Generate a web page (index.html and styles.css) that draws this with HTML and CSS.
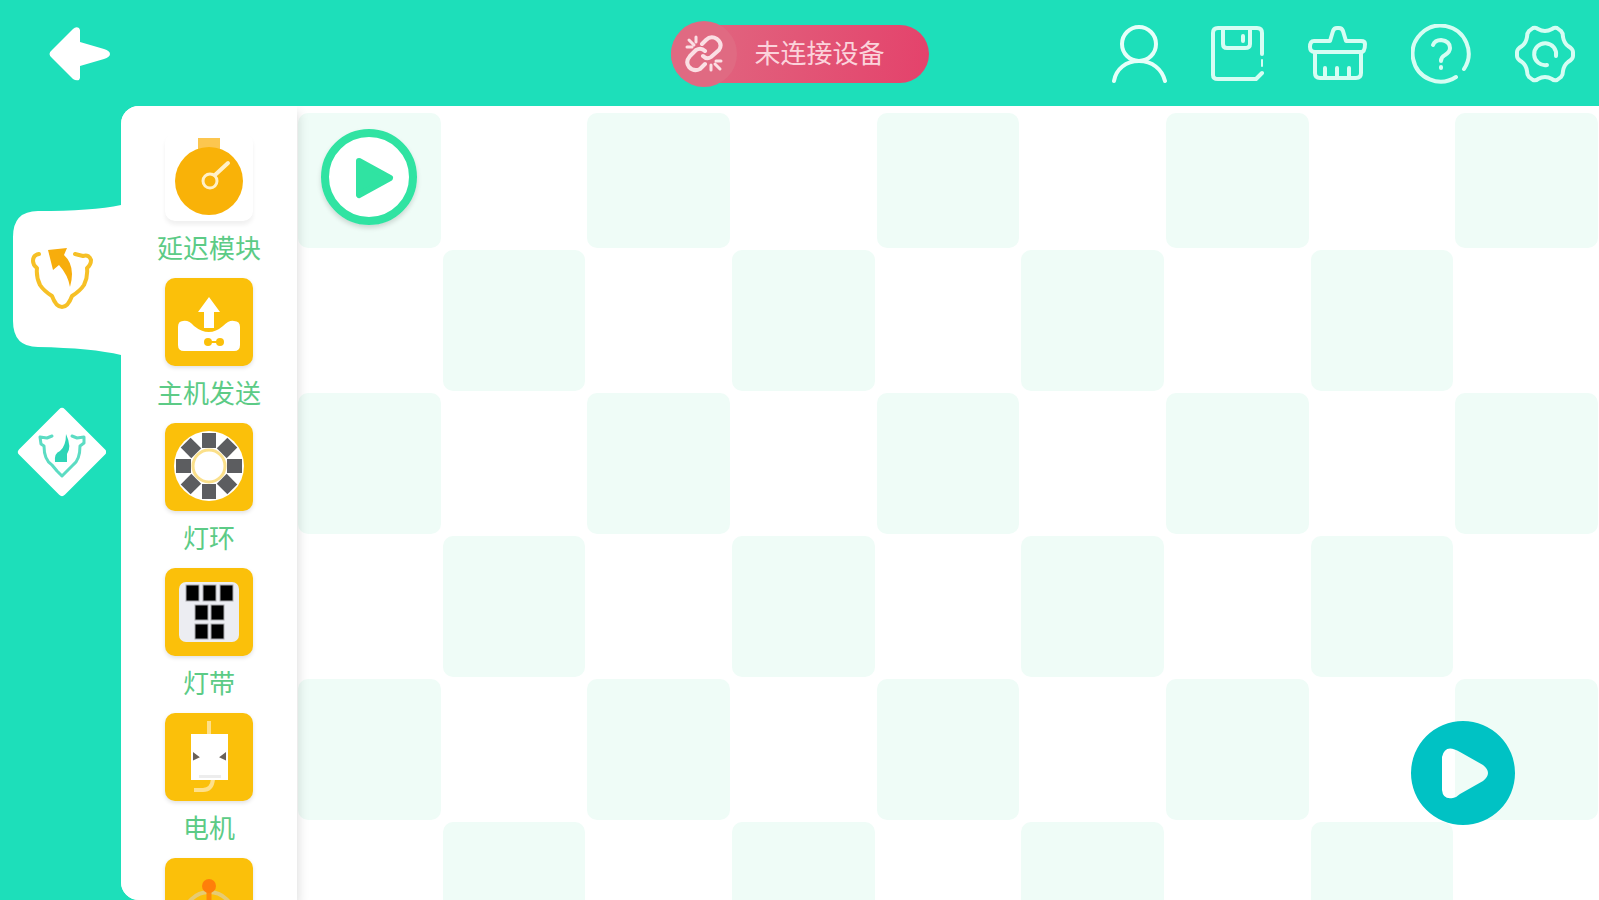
FILE: index.html
```html
<!DOCTYPE html>
<html lang="zh-CN">

<head>
    <meta charset="UTF-8">
    <meta name="viewport" content="width=device-width, initial-scale=1.0">
    <title>编程</title>
    <link rel="stylesheet" href="styles.css">
</head>

<body>
    <header>
        <button class="back" aria-label="返回">
            <svg width="62" height="54" viewBox="0 0 62 54">
                <path d="M3 23 L24 2 Q27 -1 30 1 L31 3 V15 L55 22 Q61 24 61 27 Q61 30 55 32 L31 39 V51 L30 53 Q27 54 24 52 L3 31 Q-2 27 3 23 Z" fill="#fff" />
            </svg>
        </button>

        <button class="device">
            <span class="device-icon">
                <svg width="40" height="40" viewBox="0 0 40 40" fill="none" stroke="#fbdfe4" stroke-width="4" stroke-linecap="round" stroke-linejoin="round">
                    <path d="M18 10 L22 6 Q27 1 33 5 Q39 10 35 16 L27 23 Q23 26 19 22" />
                    <path d="M21 17 Q17 13 12 16 L6 22 Q1 28 5 33 Q10 38 16 35 L21 30" />
                    <path d="M12 3 V8 M5 6 L10 11 M3 13 H8" stroke-width="3" />
                    <path d="M27 31 V36 M31 30 L36 35 M32 27 H37" stroke-width="3" />
                </svg>
            </span>
            <span class="device-text">未连接设备</span>
        </button>

        <nav class="tools">
            <button aria-label="用户">
                <svg width="55" height="60" viewBox="0 0 55 60" fill="none" stroke="#e6fff9" stroke-width="4" stroke-linecap="round">
                    <circle cx="27" cy="20" r="17" />
                    <path d="M2 57 C4 45 14 37 27 37 S50 45 53 57" />
                </svg>
            </button>
            <button aria-label="保存">
                <svg width="53" height="60" viewBox="0 0 53 60" fill="none" stroke="#d6fdf3" stroke-width="4" stroke-linecap="round" stroke-linejoin="round">
                    <path d="M51 30 V9 Q51 4 46 4 H7 Q2 4 2 9 V51 Q2 55 7 55 H45 L51 49" />
                    <path d="M51 36 V42" stroke-width="2" />
                    <path d="M12 5 V20 Q12 24 16 24 H34 Q39 24 39 20 V5 M32 12 V17" />
                </svg>
            </button>
            <button aria-label="清空">
                <svg width="59" height="60" viewBox="0 0 59 60" fill="none" stroke="#d6fdf3" stroke-width="4" stroke-linecap="round" stroke-linejoin="round">
                    <path d="M22 17 L25 7 Q26 4 29 4 H31 Q34 4 35 7 L38 17 H53 Q57 17 57 20 Q57 28 53 28 H7 Q2 28 2 23 Q2 17 6 17 Z" />
                    <path d="M7 28 V49 Q7 54 12 54 H48 Q53 54 53 49 V28" />
                    <path d="M17 44 V53 M29 44 V53 M41 44 V53" />
                </svg>
            </button>
            <button aria-label="帮助">
                <svg width="60" height="60" viewBox="0 0 60 60" fill="none" stroke="#d6fdf3" stroke-width="4" stroke-linecap="round" stroke-linejoin="round">
                    <path d="M45 53 A28 28 0 1 1 53 45" />
                    <path d="M22 21 Q24 16 30 16 Q39 17 39 24 Q39 28 34 31 Q30 33 30 37" />
                    <path d="M30 43 V44" />
                </svg>
            </button>
            <button aria-label="设置">
                <svg width="60" height="60" viewBox="0 0 60 60" fill="none" stroke="#d6fdf3" stroke-width="4" stroke-linecap="round" stroke-linejoin="round">
                    <path d="M18 4 Q21 3 23 5 Q30 9 37 5 Q39 3 42 4 L46 7 Q48 9 48 13 Q49 19 53 22 Q58 25 58 28 V32 Q58 35 53 38 Q49 41 48 47 Q48 51 46 53 L42 56 Q39 57 37 55 Q30 51 23 55 Q21 57 18 56 L14 53 Q12 51 12 47 Q11 41 7 38 Q2 35 2 32 V28 Q2 25 7 22 Q11 19 12 13 Q12 9 14 7 Z" />
                    <path d="M32 41 A11 11 0 1 1 41 32" />
                </svg>
            </button>
        </nav>
    </header>

    <main>
        <aside class="tabs">
            <button class="tab active" aria-label="执行模块">
                <svg width="109" height="150" viewBox="0 0 109 150">
                    <path d="M109 0 Q80 6 26 6 Q1 6 1 32 V116 Q1 142 26 142 Q80 143 109 150 Z" fill="#fff" />
                    <g fill="none" stroke="#f6c026" stroke-width="4" stroke-linecap="round" stroke-linejoin="round">
                        <path d="M27 49 Q21 50 21 56 Q21 60 25 63 Q24 72 28 80 Q32 86 40 91 Q44 102 50 102 Q56 102 60 91 Q68 86 72 80 Q76 72 75 63 Q79 60 79 55 Q77 49 71 51 L63 49" />
                    </g>
                    <path d="M36 45 L55 43 L52 50 Q64 61 58 82 Q56 70 47 60 L41 65 Z" fill="#f7ad0c" />
                </svg>
            </button>
            <button class="tab" aria-label="音乐模块">
                <svg width="90" height="90" viewBox="0 0 90 90">
                    <path d="M46 5 L86 45 L46 85 L6 45 Z" fill="#fff" stroke="#fff" stroke-width="8" stroke-linejoin="round" />
                    <g fill="none" stroke="#5cdcc3" stroke-width="3" stroke-linecap="round" stroke-linejoin="round">
                        <path d="M36 29 L31 31 L24 30 L25 37 L28 39 Q28 53 36 58 L41 64 L46 69 L51 64 L57 58 Q64 53 64 39 L68 36 L68 30 L61 31 L56 29" />
                    </g>
                    <path d="M50 27 Q56 40 51 47 V55 H39 Q38 46 44 44 Q50 39 50 27 Z" fill="#2fd5b7" />
                </svg>
            </button>
        </aside>

        <section class="workspace">
            <ul class="palette">
                <li>
                    <button class="block plain" aria-labelledby="b1">
                        <svg width="88" height="88" viewBox="0 0 88 88">
                            <path d="M33 5 H55 V16 H33 Z" fill="#fcc64f" />
                            <circle cx="44" cy="48" r="34" fill="#f9b208" />
                            <circle cx="45" cy="48" r="7" fill="none" stroke="#fff0c8" stroke-width="3" />
                            <path d="M50 42 L63 30" stroke="#fff0c8" stroke-width="4" stroke-linecap="round" />
                        </svg>
                    </button>
                    <span id="b1">延迟模块</span>
                </li>
                <li>
                    <button class="block" aria-labelledby="b2">
                        <svg width="88" height="88" viewBox="0 0 88 88" fill="#fff">
                            <path d="M44 19 L55 34 H49 V50 H39 V34 H33 Z" />
                            <path d="M13 49 Q13 43 18 43 Q24 42 29 48 Q44 60 58 48 Q64 42 69 43 Q75 43 75 49 V67 Q75 73 69 73 H19 Q13 73 13 67 Z" />
                            <g fill="#fbc00a">
                                <circle cx="43" cy="64" r="4" />
                                <circle cx="55" cy="64" r="4" />
                                <path d="M43 63 H55 V65 H43 Z" />
                            </g>
                        </svg>
                    </button>
                    <span id="b2">主机发送</span>
                </li>
                <li>
                    <button class="block" aria-labelledby="b3">
                        <svg width="88" height="88" viewBox="0 0 88 88">
                            <circle cx="44" cy="43" r="35" fill="#fff" />
                            <g fill="#5c5d60">
                                <path id="led" d="M37 10 H51 V25 H37 Z" />
                                <use href="#led" transform="rotate(45 44 43)" />
                                <use href="#led" transform="rotate(90 44 43)" />
                                <use href="#led" transform="rotate(135 44 43)" />
                                <use href="#led" transform="rotate(180 44 43)" />
                                <use href="#led" transform="rotate(225 44 43)" />
                                <use href="#led" transform="rotate(270 44 43)" />
                                <use href="#led" transform="rotate(315 44 43)" />
                            </g>
                            <circle cx="44" cy="43" r="16" fill="#fff" stroke="#fbe08a" stroke-width="3" />
                        </svg>
                    </button>
                    <span id="b3">灯环</span>
                </li>
                <li>
                    <button class="block" aria-labelledby="b4">
                        <svg width="88" height="88" viewBox="0 0 88 88">
                            <rect x="14" y="14" width="60" height="60" rx="7" fill="#ecedf2" />
                            <g stroke="#a9aaad">
                                <rect x="21" y="17" width="13" height="16" />
                                <rect x="38" y="17" width="13" height="16" />
                                <rect x="55" y="17" width="13" height="16" />
                                <rect x="30" y="37" width="13" height="15" />
                                <rect x="46" y="37" width="13" height="15" />
                                <rect x="30" y="56" width="13" height="15" />
                                <rect x="46" y="56" width="13" height="15" />
                            </g>
                        </svg>
                    </button>
                    <span id="b4">灯带</span>
                </li>
                <li>
                    <button class="block" aria-labelledby="b5">
                        <svg width="88" height="88" viewBox="0 0 88 88">
                            <path d="M44 8 V21 M48 66 Q47 77 38 77 H29" fill="none" stroke="#fee08a" stroke-width="4" />
                            <rect x="26" y="21" width="37" height="46" fill="#fff" />
                            <path d="M34 62 H56 V65 H34 Z" fill="#ededed" />
                            <path d="M29 41 L33 44 L29 46 Z M60 41 L56 44 L60 46 Z" fill="#6b6259" stroke="#6b6259" stroke-width="2" />
                        </svg>
                    </button>
                    <span id="b5">电机</span>
                </li>
                <li>
                    <button class="block" aria-label="舵机">
                        <svg width="88" height="88" viewBox="0 0 88 88">
                            <circle cx="44" cy="59" r="25" fill="none" stroke="#e6cb74" stroke-width="4" />
                            <path d="M44 28 V60" stroke="#ff8a0a" stroke-width="5" />
                            <circle cx="44" cy="28" r="7" fill="#ff7f0a" />
                        </svg>
                    </button>
                </li>
            </ul>

            <div class="board">
                <div class="cells" id="cells"></div>
                <button class="start" aria-label="开始">
                    <svg width="96" height="96" viewBox="0 0 96 96">
                        <circle cx="48" cy="48" r="44" fill="#fff" stroke="#30e3a2" stroke-width="8" />
                        <path d="M38 32 L69 49 L38 66 Z" fill="#30e3a2" stroke="#30e3a2" stroke-width="6" stroke-linejoin="round" />
                    </svg>
                </button>
                <button class="run" aria-label="运行">
                    <svg width="104" height="104" viewBox="0 0 104 104">
                        <path fill="#00c2c4" fill-rule="evenodd" d="M52 0 A52 52 0 1 1 52 104 A52 52 0 1 1 52 0 Z M31 36 V69 Q32 79 42 77 Q46 76 49 73 L72 60 Q82 52 72 44 L49 31 Q34 22 31 36 Z" />
                    </svg>
                </button>
            </div>
        </section>
    </main>

    <script>
        // checkerboard: 9 columns, 6 rows
        const cells = document.getElementById('cells');
        for (let i = 0; i < 54; i++) {
            cells.appendChild(document.createElement('div'));
        }
    </script>
</body>

</html>
```
FILE: styles.css
```css
* {
    box-sizing: border-box;
}

body {
    font-family: "Noto Sans CJK SC", sans-serif;
    margin: 0;
    height: 100vh;
    display: flex;
    flex-direction: column;
    overflow: hidden;
    background-color: #1ddfba;
}

button {
    background: none;
    border: none;
    padding: 0;
    font-family: inherit;
    cursor: pointer;
}

svg {
    display: block;
}

header {
    display: grid;
    grid-template-columns: 1fr auto 1fr;
    align-items: center;
    height: 106px;
    flex-shrink: 0;
    padding: 2px 24px 0 49px;
}

.back {
    justify-self: start;
}

.device {
    display: flex;
    align-items: center;
    gap: 17px;
    height: 58px;
    margin-left: -24px;
    padding-right: 44px;
    border-radius: 29px;
    background: linear-gradient(100deg, #e06a82, #e4426b);
    color: #fbd3db;
    font-size: 26px;
}

.device-icon {
    display: flex;
    align-items: center;
    justify-content: center;
    width: 66px;
    height: 66px;
    border-radius: 50%;
    background: #e06a82;
}

.device-text {
    line-height: 36px;
    padding-bottom: 4px;
}

.tools {
    display: flex;
    align-items: center;
    justify-self: end;
    gap: 44px;
}

main {
    flex: 1;
    display: flex;
    min-height: 0;
}

.tabs {
    width: 121px;
    flex-shrink: 0;
    display: flex;
    flex-direction: column;
    align-items: center;
    gap: 52px;
    padding-top: 99px;
}

.tab.active {
    align-self: flex-end;
}

.workspace {
    flex: 1;
    display: flex;
    min-width: 0;
    border-radius: 18px 0 0 18px;
    background: #fff;
    overflow: hidden;
}

.palette {
    list-style: none;
    margin: 0;
    padding: 27px 0 0;
    width: 176px;
    flex-shrink: 0;
    z-index: 1;
    background: #fff;
    box-shadow: 2px 6px 10px rgba(0, 0, 0, 0.12);
}

.palette li {
    display: flex;
    flex-direction: column;
    align-items: center;
    height: 145px;
}

.palette span {
    color: #5ccb86;
    font-size: 26px;
    line-height: 51px;
}

.block {
    border-radius: 10px;
    background: #fbc00a;
    box-shadow: 0 2px 4px rgba(0, 0, 0, 0.12);
}

.block.plain {
    background: #fff;
    box-shadow: 0 4px 4px rgba(0, 0, 0, 0.06);
}

.board {
    flex: 1;
    position: relative;
    min-width: 0;
    padding-top: 6px;
}

.cells {
    display: grid;
    grid-template-columns: repeat(9, 1fr);
    grid-template-rows: 137px;
    grid-auto-rows: 143px;
}

.cells div {
    margin: 1px;
    border-radius: 10px;
}

.cells div:nth-child(odd) {
    background: #effcf7;
}

.start {
    position: absolute;
    top: 23px;
    left: 24px;
    border-radius: 50%;
    box-shadow: 0 3px 5px rgba(0, 0, 0, 0.15);
}

.run {
    position: absolute;
    right: 84px;
    bottom: 75px;
}
```
